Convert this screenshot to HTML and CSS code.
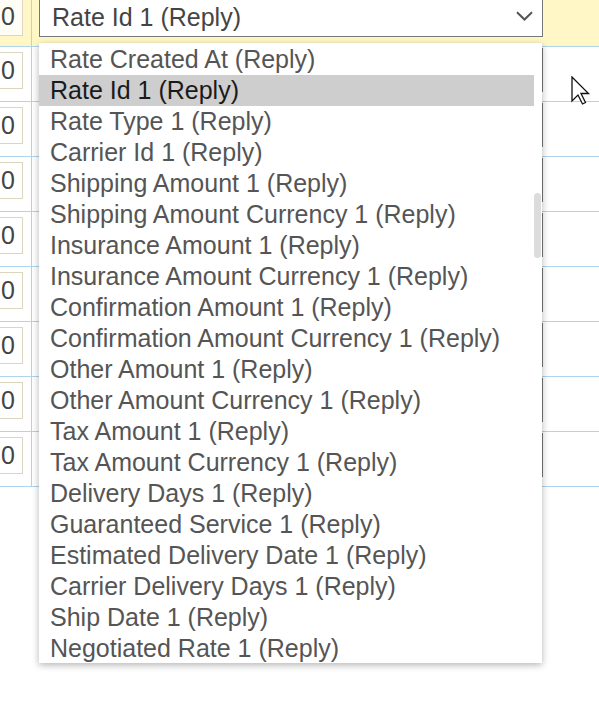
FILE: index.html
```html
<!DOCTYPE html>
<html>
<head>
<meta charset="utf-8">
<link rel="stylesheet" href="styles.css">
</head>
<body>
<div class="grid">
  <div class="row row-head">
    <div class="cell-num"><div class="num num-head">0</div></div>
    <div class="cell-field">
      <div class="select select-head">
        <span>Rate Id 1 (Reply)</span>
        <svg class="chevron" width="17" height="10" viewBox="0 0 17 10"><path d="M1 1.2 L8.5 8.5 L16 1.2" fill="none" stroke="#555" stroke-width="2"/></svg>
      </div>
    </div>
  </div>
  <div class="row"><div class="cell-num"><div class="num">0</div></div><div class="cell-field"><div class="select"></div></div></div>
  <div class="row"><div class="cell-num"><div class="num">0</div></div><div class="cell-field"><div class="select"></div></div></div>
  <div class="row"><div class="cell-num"><div class="num">0</div></div><div class="cell-field"><div class="select"></div></div></div>
  <div class="row"><div class="cell-num"><div class="num">0</div></div><div class="cell-field"><div class="select"></div></div></div>
  <div class="row"><div class="cell-num"><div class="num">0</div></div><div class="cell-field"><div class="select"></div></div></div>
  <div class="row"><div class="cell-num"><div class="num">0</div></div><div class="cell-field"><div class="select"></div></div></div>
  <div class="row"><div class="cell-num"><div class="num">0</div></div><div class="cell-field"><div class="select"></div></div></div>
  <div class="row"><div class="cell-num"><div class="num">0</div></div><div class="cell-field"><div class="select"></div></div></div>
</div>

<div class="dropdown">
  <ul class="options">
    <li>Rate Created At (Reply)</li>
    <li class="active">Rate Id 1 (Reply)</li>
    <li>Rate Type 1 (Reply)</li>
    <li>Carrier Id 1 (Reply)</li>
    <li>Shipping Amount 1 (Reply)</li>
    <li>Shipping Amount Currency 1 (Reply)</li>
    <li>Insurance Amount 1 (Reply)</li>
    <li>Insurance Amount Currency 1 (Reply)</li>
    <li>Confirmation Amount 1 (Reply)</li>
    <li>Confirmation Amount Currency 1 (Reply)</li>
    <li>Other Amount 1 (Reply)</li>
    <li>Other Amount Currency 1 (Reply)</li>
    <li>Tax Amount 1 (Reply)</li>
    <li>Tax Amount Currency 1 (Reply)</li>
    <li>Delivery Days 1 (Reply)</li>
    <li>Guaranteed Service 1 (Reply)</li>
    <li>Estimated Delivery Date 1 (Reply)</li>
    <li>Carrier Delivery Days 1 (Reply)</li>
    <li>Ship Date 1 (Reply)</li>
    <li>Negotiated Rate 1 (Reply)</li>
  </ul>
  <div class="track"><div class="thumb"></div></div>
</div>

<svg class="cursor" width="20" height="30" viewBox="0 0 20 30">
  <path d="M1 1 L1 25 L7 19 L11.5 28 L14.5 26.5 L10 17.5 L17.5 17.5 Z" fill="#fff" stroke="#111" stroke-width="1.3" stroke-linejoin="miter"/>
</svg>
</body>
</html>
```

FILE: styles.css
```css
html, body {
  margin: 0;
  padding: 0;
}
body {
  width: 599px;
  height: 714px;
  overflow: hidden;
  position: relative;
  background: #fff;
  font-family: "Liberation Sans", Arial, sans-serif;
}
.grid {
  display: flex;
  flex-direction: column;
}
.row {
  display: flex;
  height: 55px;
  box-sizing: border-box;
  border-bottom: 1px solid #aed4ee;
}
.row-head {
  height: 47px;
  background: #fff8c6;
}
.cell-num {
  flex: none;
  width: 32px;
  box-sizing: border-box;
  border-right: 1px solid #aed4ee;
  padding-right: 8px;
  display: flex;
  justify-content: flex-end;
  align-items: flex-start;
  overflow: hidden;
}
.num {
  flex: none;
  width: 40px;
  height: 37px;
  margin-top: 5px;
  box-sizing: border-box;
  border: 1px solid #dcd6c0;
  background: #fff;
  padding-left: 17px;
  font-size: 25px;
  line-height: 35px;
  color: #444;
}
.num-head {
  margin-top: 0;
  height: 36px;
  border-top: none;
  background: #fffef6;
  line-height: 33px;
}
.cell-field {
  flex: 1;
  padding-left: 7px;
}
.select {
  width: 504px;
  height: 44px;
  margin-top: 1px;
  box-sizing: border-box;
  border: 1px solid #777;
  background: #fff;
}
.select-head {
  margin-top: 0;
  height: 37px;
  border-top: none;
  display: flex;
  align-items: center;
  justify-content: space-between;
  padding: 0 9px 1px 12px;
  font-size: 25px;
  color: #444;
}
.chevron {
  display: block;
  margin-top: -3px;
}
.dropdown {
  position: absolute;
  left: 39px;
  top: 43px;
  width: 503px;
  height: 620px;
  background: #fff;
  box-shadow: 0 2px 7px rgba(0, 0, 0, 0.3);
  display: flex;
}
.options {
  list-style: none;
  margin: 0;
  padding: 1px 0 0;
  width: 495px;
}
.options li {
  height: 31px;
  line-height: 30px;
  padding-left: 11px;
  font-size: 25px;
  color: #555;
  white-space: nowrap;
}
.options li.active {
  background: #cecece;
  color: #1a1a1a;
}
.track {
  width: 8px;
  padding-top: 150px;
  box-sizing: border-box;
}
.thumb {
  width: 7px;
  height: 65px;
  border-radius: 4px;
  background: #dcdcdc;
}
.cursor {
  position: absolute;
  left: 571px;
  top: 76px;
}
```
